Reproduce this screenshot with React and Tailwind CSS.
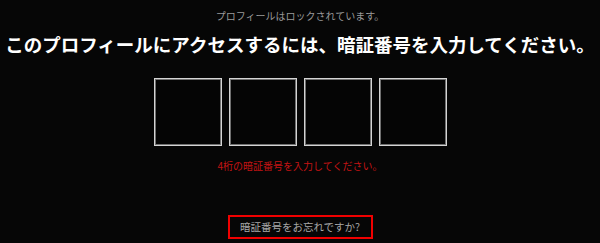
export default function App() {
  const jp = { fontFamily: '"Noto Sans CJK JP", "Noto Sans", sans-serif' };
  return (
    <div
      className="w-[600px] h-[243px] bg-[#060606] flex flex-col items-center overflow-hidden"
      style={jp}
    >
      {/* ロック表示 */}
      <p className="mt-[9px] h-[14px] leading-[14px] text-[10px] text-[#9a9a9a]">
        プロフィールはロックされています。
      </p>

      {/* 見出し */}
      <h1 className="mt-[9px] h-[24px] leading-[24px] text-[18.5px] font-bold text-white whitespace-nowrap">
        このプロフィールにアクセスするには、暗証番号を入力してください。
      </h1>

      {/* PIN入力 */}
      <div className="mt-[22px] flex gap-[7px]">
        {[0, 1, 2, 3].map((i) => (
          <div
            key={i}
            className="w-[68px] h-[68px] border border-[#d4d4d4] shadow-[inset_0_0_0_1px_#707070] bg-[#050505]"
          />
        ))}
      </div>

      {/* エラー */}
      <p className="mt-[13px] h-[14px] leading-[14px] text-[10px] text-[#c41414]">
        4桁の暗証番号を入力してください。
      </p>

      {/* 忘れた場合 */}
      <button className="mt-[42px] w-[145px] h-[24px] border-2 border-[#f00000] text-[10.5px] leading-none text-[#a8a8a8] flex items-center justify-center">
        暗証番号をお忘れですか?
      </button>
    </div>
  );
}
